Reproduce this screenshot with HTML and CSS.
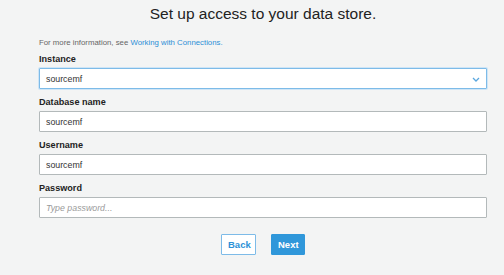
FILE: index.html
```html
<!DOCTYPE html>
<html>
<head>
  <title>Set up access to your data store</title>
  <link rel="stylesheet" href="styles.css">
</head>
<body>
  <div class="wizard">
    <h1 class="title">Set up access to your data store.</h1>
    <p class="info">For more information, see <a href="#">Working with Connections.</a></p>

    <div class="field">
      <label class="field-label">Instance</label>
      <div class="select focused">
        <span>sourcemf</span>
        <svg class="chevron" width="8" height="5" viewBox="0 0 8 5">
          <path d="M1 1 L4 4 L7 1" fill="none" stroke="#5aa7df" stroke-width="1.3"/>
        </svg>
      </div>
    </div>

    <div class="field">
      <label class="field-label">Database name</label>
      <input class="text-input" type="text" value="sourcemf">
    </div>

    <div class="field">
      <label class="field-label">Username</label>
      <input class="text-input" type="text" value="sourcemf">
    </div>

    <div class="field">
      <label class="field-label">Password</label>
      <input class="text-input" type="password" placeholder="Type password...">
    </div>

    <div class="actions">
      <button class="btn btn-secondary">Back</button>
      <button class="btn btn-primary">Next</button>
    </div>
  </div>
</body>
</html>
```

FILE: styles.css
```css
body {
  margin: 0;
  background: #f3f4f4;
  font-family: "Liberation Sans", Arial, sans-serif;
  color: #222;
}
.wizard {
  width: 448px;
  margin-left: 39px;
}
.title {
  margin: 4px 0 0;
  font-size: 15.5px;
  line-height: 20px;
  font-weight: normal;
  text-align: center;
  color: #222;
}
.info {
  margin: 13px 0 0;
  font-size: 7.8px;
  line-height: 12px;
  color: #666;
}
.info a {
  color: #2b8fd6;
  text-decoration: none;
}
.field {
  margin-top: 3px;
  margin-bottom: 6px;
}
.field-label {
  display: block;
  font-size: 9.1px;
  line-height: 14px;
  font-weight: bold;
  color: #222;
  margin-bottom: 2px;
}
.text-input, .select {
  display: block;
  box-sizing: border-box;
  width: 448px;
  height: 21px;
  margin: 0;
  padding: 0 6px;
  border: 1px solid #b3b9ba;
  border-radius: 1px;
  background: #fff;
  font-family: "Liberation Sans", Arial, sans-serif;
  font-size: 8.8px;
  color: #333;
  outline: none;
}
.text-input::placeholder {
  color: #9a9a9a;
  font-style: italic;
}
.select {
  display: flex;
  align-items: center;
  justify-content: space-between;
}
.select.focused {
  border-color: #7dbbe8;
  box-shadow: 0 0 0 1px #cfe5f6;
}
.chevron {
  margin-top: 2px;
}
.actions {
  display: flex;
  justify-content: center;
  gap: 15px;
  margin-top: 16px;
}
.btn {
  box-sizing: border-box;
  height: 21px;
  padding: 0 6px;
  font-family: "Liberation Sans", Arial, sans-serif;
  font-size: 9.5px;
  font-weight: bold;
  border-radius: 1px;
  cursor: pointer;
}
.btn-secondary {
  width: 35px;
  background: #fff;
  border: 1px solid #7dbbe8;
  color: #2e91d7;
}
.btn-primary {
  width: 34px;
  background: #2f97da;
  border: 1px solid #2f97da;
  color: #fff;
}
```
